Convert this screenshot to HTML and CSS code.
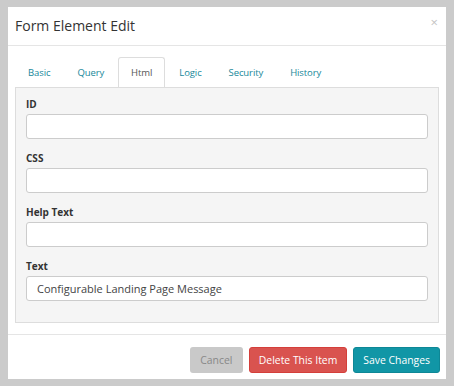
FILE: index.html
```html
<!DOCTYPE html>
<html lang="en">
<head>
  <meta charset="UTF-8">
  <title>Form Element Edit</title>
  <link rel="stylesheet" href="styles.css">
</head>
<body>

  <div class="modal">
    <!-- Cabecera -->
    <div class="modal-header">
      <h4>Form Element Edit</h4>
      <span class="close">&times;</span>
    </div>

    <!-- Cuerpo con pestañas -->
    <div class="modal-body">
      <ul class="tabs">
        <li><a href="#">Basic</a></li>
        <li><a href="#">Query</a></li>
        <li class="active"><a href="#">Html</a></li>
        <li><a href="#">Logic</a></li>
        <li><a href="#">Security</a></li>
        <li><a href="#">History</a></li>
      </ul>

      <div class="pane">
        <div class="field">
          <label>ID</label>
          <input type="text">
        </div>
        <div class="field">
          <label>CSS</label>
          <input type="text">
        </div>
        <div class="field">
          <label>Help Text</label>
          <input type="text">
        </div>
        <div class="field">
          <label>Text</label>
          <input type="text" value="Configurable Landing Page Message">
        </div>
      </div>
    </div>

    <!-- Pie -->
    <div class="modal-footer">
      <button class="btn btn-cancel">Cancel</button>
      <button class="btn btn-delete">Delete This Item</button>
      <button class="btn btn-save">Save Changes</button>
    </div>
  </div>

</body>
</html>
```

FILE: styles.css
```css
* {
  margin: 0;
  padding: 0;
  box-sizing: border-box;
}

body {
  background: #cbcbcb;
  font-family: 'Open Sans', sans-serif;
  font-size: 11px;
  color: #333;
  padding: 7px 8px;
}

.modal {
  background: white;
  width: 438px;
  height: 372px;
}

.modal-header {
  display: flex;
  justify-content: space-between;
  align-items: center;
  height: 39px;
  padding: 0 8px 2px 7px;
  border-bottom: 1px solid #e5e5e5;
}

.modal-header h4 {
  font-size: 14px;
  font-weight: normal;
  color: #333;
}

.close {
  color: #c4c4c4;
  font-size: 13px;
  margin-top: -6px;
}

.modal-body {
  padding: 11px 7px 11px 7px;
}

.tabs {
  display: flex;
  list-style: none;
  height: 30px;
}

.tabs li {
  margin-right: 1px;
}

.tabs a {
  display: block;
  height: 30px;
  line-height: 30px;
  padding: 0 12px;
  font-size: 9.5px;
  letter-spacing: -0.1px;
  color: #17889a;
  text-decoration: none;
  border: 1px solid transparent;
  border-bottom: none;
  border-radius: 3px 3px 0 0;
}

.tabs .active a {
  color: #555;
  background: white;
  border-color: #ddd;
}

.pane {
  background: #f5f5f5;
  border: 1px solid #ddd;
  padding: 8px 10px 10px;
}

.field {
  margin-bottom: 11px;
}

.field label {
  display: block;
  font-size: 10px;
  font-weight: bold;
  line-height: 16px;
  margin-bottom: 2px;
}

.field input {
  display: block;
  width: 100%;
  height: 25px;
  border: 1px solid #ccc;
  border-radius: 3px;
  background: white;
  padding: 0 10px;
  font-family: 'Open Sans', sans-serif;
  font-size: 11px;
  color: #444;
}

.modal-footer {
  display: flex;
  justify-content: flex-end;
  gap: 6px;
  border-top: 1px solid #e5e5e5;
  padding: 12px 6px 0 0;
}

.btn {
  height: 26px;
  padding: 0 9px;
  border: 1px solid transparent;
  border-radius: 3px;
  font-family: 'Open Sans', sans-serif;
  font-size: 10.4px;
  color: white;
  cursor: pointer;
}

.btn-cancel {
  background: #c9c9c9;
  color: #888;
  width: 53px;
}

.btn-delete {
  background: #d9534f;
  border-color: #d43f3a;
}

.btn-save {
  background: #1196a6;
  border-color: #0e8796;
}
```
